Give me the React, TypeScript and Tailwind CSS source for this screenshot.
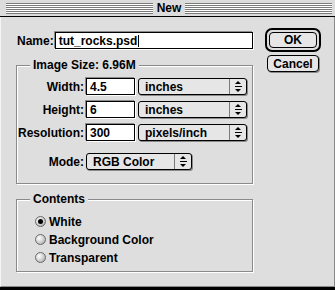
import React from 'react';

const font = { fontFamily: '"Liberation Sans", Arial, sans-serif' };

function Stripes() {
  return <div className="h-[11px] flex-1 bg-[repeating-linear-gradient(to_bottom,#7a7a7a_0px,#7a7a7a_1px,#ffffff_1px,#ffffff_2px)]" />;
}

function TextBox({ value, width, caret }: { value: string; width: string; caret?: boolean }) {
  return (
    <div className={`flex h-[17px] ${width} items-center border border-black bg-white pl-[3px] shadow-[1px_1px_0_#ffffff,-1px_-1px_0_#8a8a8a]`}>
      <span className="text-[12px] font-bold leading-none text-black">{value}</span>
      {caret && <span className="ml-[1px] h-[12px] w-px bg-black" />}
    </div>
  );
}

function Popup({ value, width }: { value: string; width: string }) {
  return (
    <div className={`flex h-[17px] ${width} items-stretch rounded-[3px] border border-black bg-[#e6e6e6] shadow-[1px_1px_0_#8a8a8a]`}>
      <span className="flex flex-1 items-center pl-[6px] text-[12px] font-bold leading-none text-black">{value}</span>
      <span className="flex w-[17px] flex-col items-center justify-center gap-[2px] border-l border-[#7a7a7a]">
        <span className="h-0 w-0 border-x-[3px] border-b-[3px] border-x-transparent border-b-black" />
        <span className="h-px w-[7px] bg-black" />
        <span className="h-0 w-0 border-x-[3px] border-t-[3px] border-x-transparent border-t-black" />
      </span>
    </div>
  );
}

function Radio({ label, checked }: { label: string; checked?: boolean }) {
  return (
    <div className="flex h-[17px] items-center gap-[3px]">
      <span className="flex h-[11px] w-[11px] items-center justify-center rounded-full border border-[#6a6a6a] bg-[radial-gradient(circle_at_35%_35%,#ffffff_0%,#c8c8c8_60%,#8c8c8c_100%)]">
        {checked && <span className="h-[5px] w-[5px] rounded-full bg-black" />}
      </span>
      <span className="text-[12px] font-bold leading-none text-black">{label}</span>
    </div>
  );
}

function Group({ title, className, children }: { title: string; className: string; children: React.ReactNode }) {
  return (
    <div className={`relative w-[237px] border border-[#8a8a8a] shadow-[1px_1px_0_#ffffff,inset_1px_1px_0_#ffffff] ${className}`}>
      <span className="absolute left-[13px] top-[-7px] bg-[#dedede] px-[3px] text-[12px] font-bold leading-none text-black">
        {title}
      </span>
      {children}
    </div>
  );
}

function Row({ label, children }: { label: string; children: React.ReactNode }) {
  return (
    <div className="flex items-center">
      <span className="w-[69px] pr-[2px] text-right text-[12px] font-bold leading-none text-black">{label}</span>
      {children}
    </div>
  );
}

export default function App() {
  return (
    <div className="flex h-[290px] w-[335px] flex-col bg-black" style={font}>
      <div className="flex h-[16px] items-center gap-[3px] bg-[#dcdcdc] pl-[6px] pr-[3px]">
        <Stripes />
        <span className="px-[1px] text-[12px] font-bold leading-none text-black">New</span>
        <Stripes />
      </div>
      <div className="mt-px flex h-[270px] border-b border-[#8a8a8a] border-l border-l-[#f4f4f4] border-r border-r-[#8a8a8a] bg-[#dedede]">
        <div className="flex flex-col pl-[15px] pt-[15px]">
          <div className="flex w-[237px] items-center">
            <span className="shrink-0 whitespace-nowrap pl-[1px] pr-[1px] text-[12px] font-bold leading-none text-black">Name:</span>
            <div className="flex-1">
              <TextBox value="tut_rocks.psd" width="w-full" caret />
            </div>
          </div>
          <Group title="Image Size:  6.96M" className="mt-[16px] h-[119px]">
            <div className="flex flex-col gap-[6px] pt-[12px]">
              <Row label="Width:">
                <TextBox value="4.5" width="w-[49px]" />
                <span className="ml-[3px]" />
                <Popup value="inches" width="w-[109px]" />
              </Row>
              <Row label="Height:">
                <TextBox value="6" width="w-[49px]" />
                <span className="ml-[3px]" />
                <Popup value="inches" width="w-[109px]" />
              </Row>
              <Row label="Resolution:">
                <TextBox value="300" width="w-[49px]" />
                <span className="ml-[3px]" />
                <Popup value="pixels/inch" width="w-[109px]" />
              </Row>
              <div className="mt-[6px]">
                <Row label="Mode:">
                  <Popup value="RGB Color" width="w-[106px]" />
                </Row>
              </div>
            </div>
          </Group>
          <Group title="Contents" className="mt-[15px] h-[73px]">
            <div className="flex flex-col gap-px pl-[18px] pt-[13px]">
              <Radio label="White" checked />
              <Radio label="Background Color" />
              <Radio label="Transparent" />
            </div>
          </Group>
        </div>
        <div className="ml-[12px] flex flex-col items-center pt-[11px]">
          <div className="rounded-[7px] border-[2px] border-black p-[2px]">
            <div className="flex h-[16px] w-[48px] items-center justify-center rounded-[4px] border border-black bg-[#e6e6e6] text-[12px] font-bold leading-none text-black">
              OK
            </div>
          </div>
          <div className="mt-[3px] flex h-[17px] w-[52px] items-center justify-center rounded-[4px] border border-black bg-[#e6e6e6] text-[12px] font-bold leading-none text-black shadow-[1px_1px_0_#8a8a8a]">
            Cancel
          </div>
        </div>
      </div>
      <div className="h-[3px] bg-black" />
    </div>
  );
}
